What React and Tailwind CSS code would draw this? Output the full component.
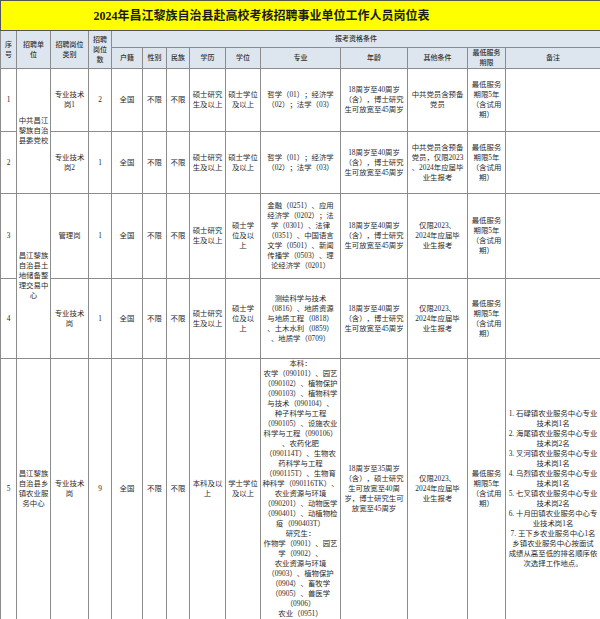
import React from 'react';

// Column widths in px, left to right
const COLS = [16, 34, 38, 23, 31, 24, 23, 36, 35, 80, 67, 60, 38, 95];

const AGE = ['18周岁至40周岁', '（含），博士研究', '生可放宽至45周岁'];
const SERVICE = ['最低服务', '期限5年', '（含试用', '期）'];
const FRESH = ['仅限2023、', '2024年应届毕', '业生报考'];

const ROWS = [
  {
    no: '1',
    unit: { lines: ['中共昌江', '黎族自治', '县委党校'], span: 2 },
    post: ['专业技术', '岗1'],
    count: '2',
    edu: ['硕士研究', '生及以上'],
    degree: ['硕士学位', '及以上'],
    major: ['哲学（01）；经济学', '（02）；法学（03）'],
    age: AGE,
    other: ['中共党员含预备', '党员'],
    h: 'h-[63px]',
  },
  {
    no: '2',
    post: ['专业技术', '岗2'],
    count: '1',
    edu: ['硕士研究', '生及以上'],
    degree: ['硕士学位', '及以上'],
    major: ['哲学（01）；经济学', '（02）；法学（03）'],
    age: AGE,
    other: ['中共党员含预备', '党员，仅限2023', '、2024年应届毕', '业生报考'],
    h: 'h-[62px]',
  },
  {
    no: '3',
    unit: { lines: ['昌江黎族', '自治县土', '地储备整', '理交易中', '心'], span: 2 },
    post: ['管理岗'],
    count: '1',
    edu: ['硕士研究', '生及以上'],
    degree: ['硕士学', '位及以', '上'],
    major: [
      '金融（0251）、应用',
      '经济学（0202）；法',
      '学（0301）、法律',
      '（0351）、中国语言',
      '文学（0501）、新闻',
      '传播学（0503）、理',
      '论经济学（0201）',
    ],
    age: AGE,
    other: FRESH,
    h: 'h-[85px]',
  },
  {
    no: '4',
    post: ['专业技术', '岗'],
    count: '1',
    edu: ['硕士研究', '生及以上'],
    degree: ['硕士学', '位及以', '上'],
    major: [
      '测绘科学与技术',
      '（0816）、地质资源',
      '与地质工程（0818）',
      '、土木水利（0859）',
      '、地质学（0709）',
    ],
    age: AGE,
    other: FRESH,
    h: 'h-[80px]',
  },
  {
    no: '5',
    unit: { lines: ['昌江黎族', '自治县乡', '镇农业服', '务中心'], span: 1 },
    post: ['专业技术', '岗'],
    count: '9',
    edu: ['本科及以', '上'],
    degree: ['学士学位', '及以上'],
    major: [
      '本科：',
      '农学（090101）、园艺',
      '（090102）、植物保护',
      '（090103）、植物科学',
      '与技术（090104）、',
      '种子科学与工程',
      '（090105）、设施农业',
      '科学与工程（090106）',
      '、农药化肥',
      '（090114T）、生物农',
      '药科学与工程',
      '（090115T）、生物育',
      '种科学（090116TK）、',
      '农业资源与环境',
      '（090201）、动物医学',
      '（090401）、动植物检',
      '疫（090403T）',
      '研究生：',
      '作物学（0901）、园艺',
      '学（0902）、',
      '农业资源与环境',
      '（0903）、植物保护',
      '（0904）、畜牧学',
      '（0905）、兽医学',
      '（0906）',
      '农业（0951）',
    ],
    age: ['18周岁至35周岁', '（含），硕士研究', '生可放宽至40周', '岁，博士研究生可', '放宽至45周岁'],
    other: FRESH,
    note: [
      '1. 石碌镇农业服务中心专业',
      '技术岗1名',
      '2. 海尾镇农业服务中心专业',
      '技术岗2名',
      '3. 叉河镇农业服务中心专业',
      '技术岗1名',
      '4. 乌烈镇农业服务中心专业',
      '技术岗1名',
      '5. 七叉镇农业服务中心专业',
      '技术岗2名',
      '6. 十月田镇农业服务中心专',
      '业技术岗1名',
      '7. 王下乡农业服务中心1名',
      '乡镇农业服务中心按面试',
      '成绩从高至低的排名顺序依',
      '次选择工作地点。',
    ],
    h: 'h-[260px]',
    tall: true,
  },
];

function Lines({ lines }) {
  return lines.map((l, i) => (
    <React.Fragment key={i}>
      {i > 0 && <br />}
      {l}
    </React.Fragment>
  ));
}

function Cell({ lines = [], rowSpan, className = '' }) {
  return (
    <td
      rowSpan={rowSpan}
      className={`border border-[#8c8c8c] text-center align-middle whitespace-nowrap p-0 leading-[10px] ${className}`}
    >
      <Lines lines={lines} />
    </td>
  );
}

function Head({ lines, rowSpan, colSpan }) {
  return (
    <td
      rowSpan={rowSpan}
      colSpan={colSpan}
      className="border border-[#8c8c8c] bg-[#dde6ee] text-center align-middle whitespace-nowrap p-0 leading-[10px] text-[7px] font-medium text-[#333]"
    >
      <Lines lines={lines} />
    </td>
  );
}

export default function App() {
  return (
    <div
      className="w-[600px] h-[619px] bg-white overflow-hidden text-[#2a2a2a] text-[7.4px] [text-spacing-trim:space-all]"
      style={{ fontFamily: '"Liberation Serif", "Noto Sans CJK SC", serif' }}
    >
      <table className="table-fixed border-collapse w-[600px]">
        <colgroup>
          {COLS.map((w, i) => (
            <col key={i} style={{ width: w }} />
          ))}
        </colgroup>
        <tbody>
          <tr className="h-[30px]">
            <td
              colSpan={14}
              className="border border-[#555] bg-[#ffff00] text-center align-middle p-0 pr-[78px] text-[12px] font-bold text-[#1a1a1a]"
            >
              2024年昌江黎族自治县赴高校考核招聘事业单位工作人员岗位表
            </td>
          </tr>
          <tr className="h-[17px]">
            <Head lines={['序', '号']} rowSpan={2} />
            <Head lines={['招聘单', '位']} rowSpan={2} />
            <Head lines={['招聘岗位', '类别']} rowSpan={2} />
            <Head lines={['招聘', '岗位', '数']} rowSpan={2} />
            <Head lines={['报考资格条件']} colSpan={10} />
          </tr>
          <tr className="h-[20px]">
            <Head lines={['户籍']} />
            <Head lines={['性别']} />
            <Head lines={['民族']} />
            <Head lines={['学历']} />
            <Head lines={['学位']} />
            <Head lines={['专业']} />
            <Head lines={['年龄']} />
            <Head lines={['其他条件']} />
            <Head lines={['最低服务', '期限']} />
            <Head lines={['备注']} />
          </tr>
          {ROWS.map((r) => (
            <tr key={r.no} className={r.h}>
              <Cell lines={[r.no]} />
              {r.unit && <Cell lines={r.unit.lines} rowSpan={r.unit.span} />}
              <Cell lines={r.post} />
              <Cell lines={[r.count]} />
              <Cell lines={['全国']} />
              <Cell lines={['不限']} />
              <Cell lines={['不限']} />
              <Cell lines={r.edu} />
              <Cell lines={r.degree} />
              <Cell lines={r.major} className={r.tall ? 'leading-[9.9px]' : ''} />
              <Cell lines={r.age} />
              <Cell lines={r.other} />
              <Cell lines={SERVICE} />
              <Cell lines={r.note || []} />
            </tr>
          ))}
        </tbody>
      </table>
    </div>
  );
}
